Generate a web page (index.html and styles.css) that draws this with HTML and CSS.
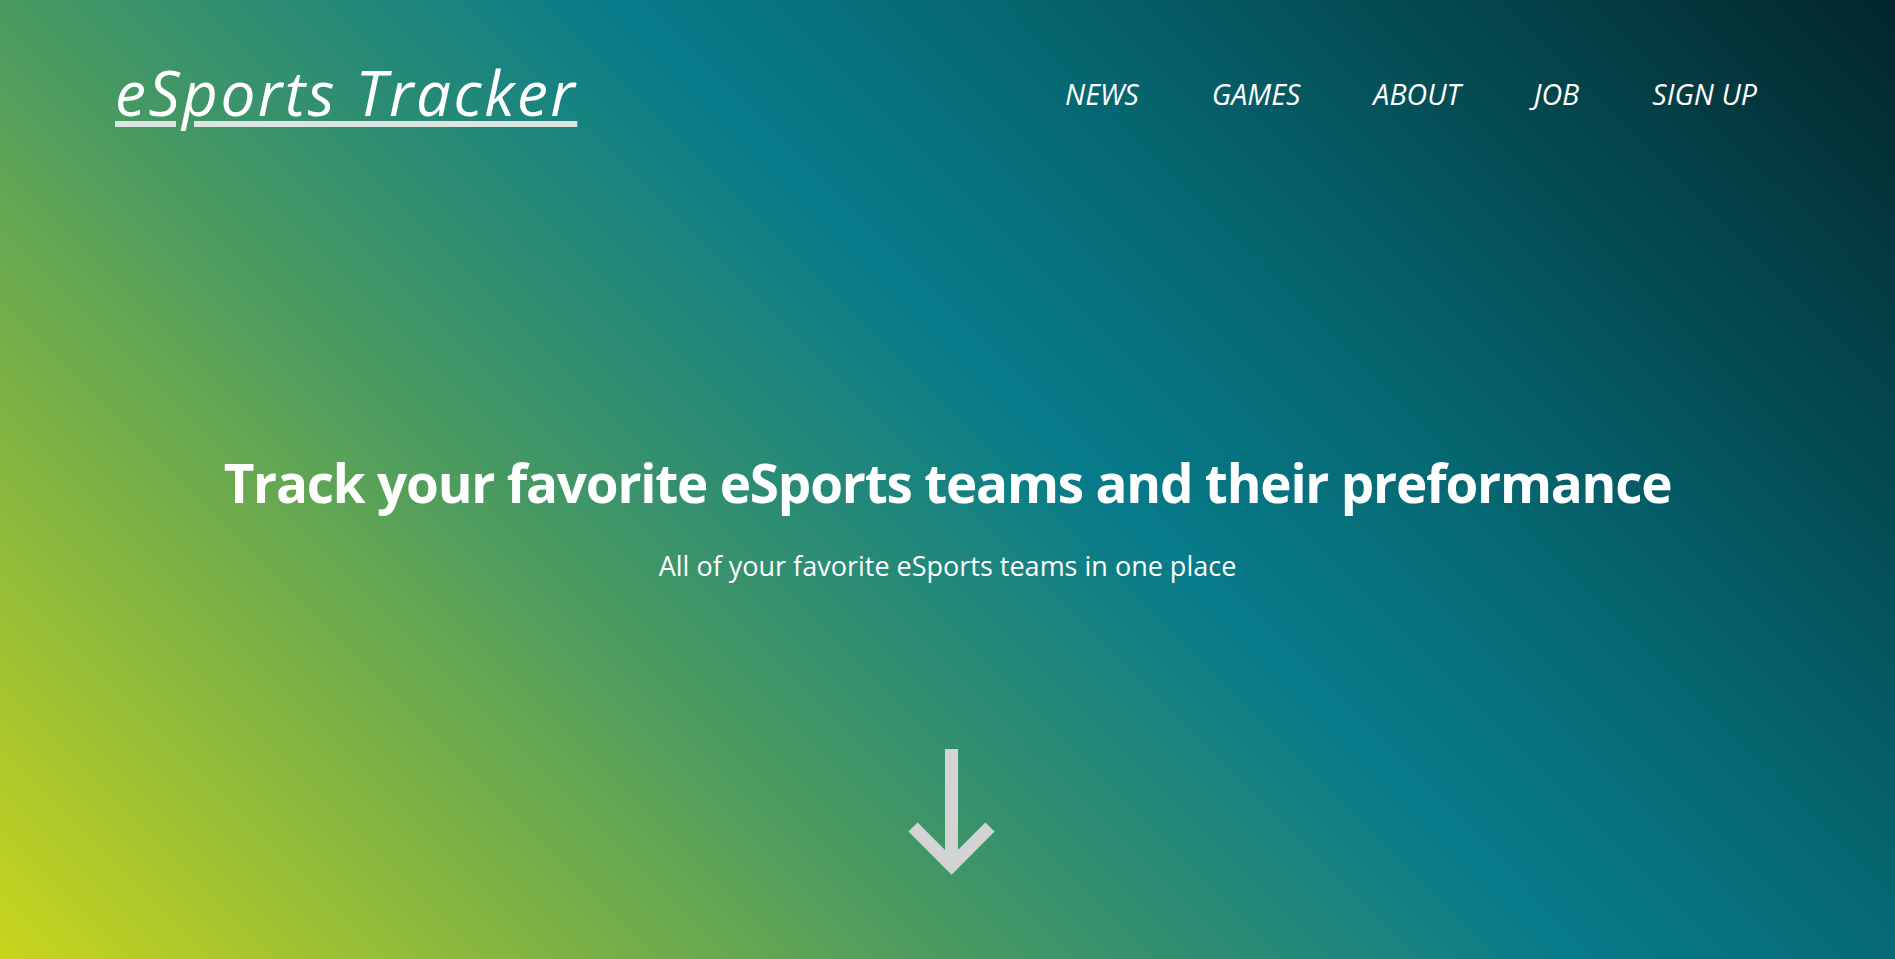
FILE: index.html
```html
<!DOCTYPE html>
<html lang="en">
<head>
<meta charset="utf-8">
<title>eSports Tracker</title>
<link rel="stylesheet" href="styles.css">
</head>
<body>
<div class="hero">
  <header class="topbar">
    <a class="logo" href="#">eSports Tracker</a>
    <nav class="nav">
      <a href="#">NEWS</a>
      <a href="#">GAMES</a>
      <a href="#">ABOUT</a>
      <a href="#">JOB</a>
      <a href="#">SIGN UP</a>
    </nav>
  </header>
  <main class="intro">
    <h1 class="title">Track your favorite eSports teams and their preformance</h1>
    <p class="subtitle">All of your favorite eSports teams in one place</p>
    <svg class="arrow" width="100" height="130" viewBox="0 0 100 130">
      <line x1="50.5" y1="0" x2="50.5" y2="116" stroke="#d3d3d3" stroke-width="13"/>
      <path d="M12 78 L50.5 116.5 L89 78" fill="none" stroke="#d3d3d3" stroke-width="13" stroke-linejoin="miter"/>
    </svg>
  </main>
</div>
</body>
</html>
```
FILE: styles.css
```css
html, body {
  margin: 0;
  padding: 0;
}
body {
  font-family: "Open Sans", "Noto Sans", sans-serif;
  color: #ffffff;
}
.hero {
  height: 959px;
  background: linear-gradient(45deg, #c9d51b 0%, #4b9b60 33%, #077b8a 55%, #066a74 67%, #02262b 100%);
  display: flex;
  flex-direction: column;
}
.topbar {
  display: flex;
  justify-content: space-between;
  align-items: center;
  padding: 52px 138px 0 115px;
}
.logo {
  color: #ffffff;
  font-style: italic;
  font-size: 62px;
  line-height: 80px;
  text-decoration: underline;
  text-decoration-color: #dbe6e2;
  text-decoration-thickness: 6px;
  text-underline-offset: 5px;
  letter-spacing: 2.5px;
}
.nav {
  display: flex;
  gap: 73px;
  padding-top: 2px;
}
.nav a {
  color: #ffffff;
  text-decoration: none;
  font-style: italic;
  font-size: 28.6px;
}
.intro {
  display: flex;
  flex-direction: column;
  align-items: center;
  padding-top: 316px;
}
.title {
  margin: 0;
  font-size: 53px;
  font-weight: 700;
  letter-spacing: -1.2px;
  line-height: 70px;
}
.subtitle {
  margin: 30px 0 0;
  font-size: 27px;
  line-height: 36px;
}
.arrow {
  margin: 165px 0 0 6px;
  display: block;
}
```
